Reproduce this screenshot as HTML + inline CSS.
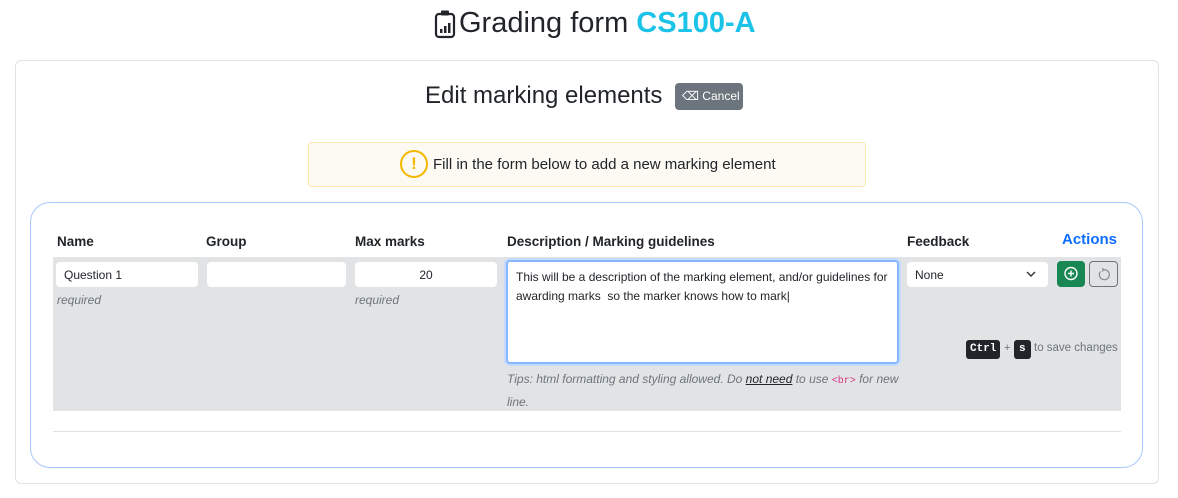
<!DOCTYPE html>
<html><head><style>
*{box-sizing:border-box;margin:0;padding:0}
body{width:1178px;height:498px;background:#fff;font-family:"Liberation Sans",sans-serif;color:#212529;position:relative;overflow:hidden}
.a{position:absolute}
.inp{position:absolute;background:#fff;border-radius:4px;font-size:12px;padding:6px 8px;color:#212529}
.hd{position:absolute;top:234px;font-size:13.5px;font-weight:bold;color:#212529}
.req{position:absolute;top:293px;font-size:12px;font-style:italic;color:#6c757d}
</style></head><body>
<div class="a" style="left:434px;top:9px;width:22px;height:30px">
<svg width="22" height="30" viewBox="0 0 22 30"><rect x="2" y="5" width="18" height="23" rx="3" fill="none" stroke="#212529" stroke-width="2.2"/><rect x="7" y="1.5" width="8" height="5" rx="1" fill="#212529"/><rect x="6" y="20" width="2.5" height="4" fill="#212529"/><rect x="10" y="17" width="2.5" height="7" fill="#212529"/><rect x="14" y="14" width="2.5" height="10" fill="#212529"/></svg></div>
<div class="a" style="left:459px;top:7px;font-size:29px;white-space:nowrap">Grading form <span style="color:#1cc3e8;font-weight:bold">CS100-A</span></div>
<div class="a" style="left:15px;top:60px;width:1144px;height:424px;border:1px solid #dee2e6;border-radius:6px"></div>
<div class="a" style="left:425px;top:82px;font-size:24px">Edit marking elements</div>
<div class="a" style="left:675px;top:83px;width:68px;height:27px;background:#6c757d;border-radius:4px;color:#fff;font-size:12px;line-height:27px;padding-left:7px">⌫ Cancel</div>
<div class="a" style="left:308px;top:142px;width:558px;height:45px;background:#fcfaf2;border:1px solid #fbe9ae;border-radius:4px"></div>
<div class="a" style="left:400px;top:150px;width:28px;height:28px;border:2px solid #f5b800;border-radius:50%;color:#f5b800;font-weight:bold;font-size:17px;text-align:center;line-height:24px">!</div>
<div class="a" style="left:433px;top:156px;font-size:15px">Fill in the form below to add a new marking element</div>
<div class="a" style="left:30px;top:202px;width:1113px;height:266px;border:1px solid #a8c8fb;border-radius:20px"></div>
<div class="hd" style="left:57px">Name</div>
<div class="hd" style="left:206px">Group</div>
<div class="hd" style="left:355px">Max marks</div>
<div class="hd" style="left:507px">Description / Marking guidelines</div>
<div class="hd" style="left:907px">Feedback</div>
<div class="hd" style="left:1062px;top:231px;color:#0d6efd;font-size:15px">Actions</div>
<div class="a" style="left:53px;top:257px;width:1068px;height:154px;background:#e2e3e5"></div>
<div class="inp" style="left:56px;top:262px;width:142px;height:25px">Question 1</div>
<div class="inp" style="left:207px;top:262px;width:139px;height:25px"></div>
<div class="inp" style="left:355px;top:262px;width:142px;height:25px;text-align:center">20</div>
<div class="req" style="left:57px">required</div>
<div class="req" style="left:355px">required</div>
<div class="inp" style="left:506px;top:260px;width:393px;height:104px;border:2px solid #86b7fe;box-shadow:0 0 0 2px #c5dbfd;line-height:19px">This will be a description of the marking element, and/or guidelines for awarding marks&nbsp; so the marker knows how to mark|</div>
<div class="a" style="left:507px;top:369px;width:395px;font-size:12px;font-style:italic;color:#6c757d;line-height:21px">Tips: html formatting and styling allowed. Do <u style="color:#212529">not need</u> to use <span style="font-style:normal;color:#d63384;font-family:'Liberation Mono',monospace;font-size:10px">&lt;br&gt;</span> for new line.</div>
<div class="inp" style="left:907px;top:262px;width:141px;height:25px">None<svg style="position:absolute;right:12px;top:9px" width="10" height="7"><path d="M1 1l4 4 4-4" fill="none" stroke="#333" stroke-width="1.4"/></svg></div>
<div class="a" style="left:1057px;top:261px;width:28px;height:26px;background:#198754;border-radius:4px"><svg width="28" height="26"><circle cx="14" cy="12.5" r="6" fill="none" stroke="#fff" stroke-width="1.4"/><path d="M14 9.5v6M11 12.5h6" stroke="#fff" stroke-width="1.4"/></svg></div>
<div class="a" style="left:1089px;top:261px;width:29px;height:26px;border:1px solid #6c757d;border-radius:4px"><svg width="27" height="24"><path d="M10.5 9.5a5 5 0 1 0 3.5-1.8" fill="none" stroke="#888" stroke-width="1.2"/><path d="M12 6l2 1.7-2 1.7" fill="none" stroke="#888" stroke-width="1.1"/></svg></div>
<div class="a" style="left:966px;top:340px;height:19px;padding:0 4px;background:#212529;color:#fff;border-radius:3px;font-family:'Liberation Mono',monospace;font-size:11px;line-height:19px;font-weight:bold">Ctrl</div>
<div class="a" style="left:1004px;top:342px;font-size:11px;color:#6c757d">+</div>
<div class="a" style="left:1014px;top:340px;height:19px;padding:0 5px;background:#212529;color:#fff;border-radius:3px;font-family:'Liberation Mono',monospace;font-size:11px;line-height:19px;font-weight:bold">s</div>
<div class="a" style="left:1034px;top:342px;font-size:11.5px;color:#6c757d;white-space:nowrap">to save changes</div>
<div class="a" style="left:53px;top:431px;width:1068px;height:1px;background:#dee2e6"></div>
</body></html>
